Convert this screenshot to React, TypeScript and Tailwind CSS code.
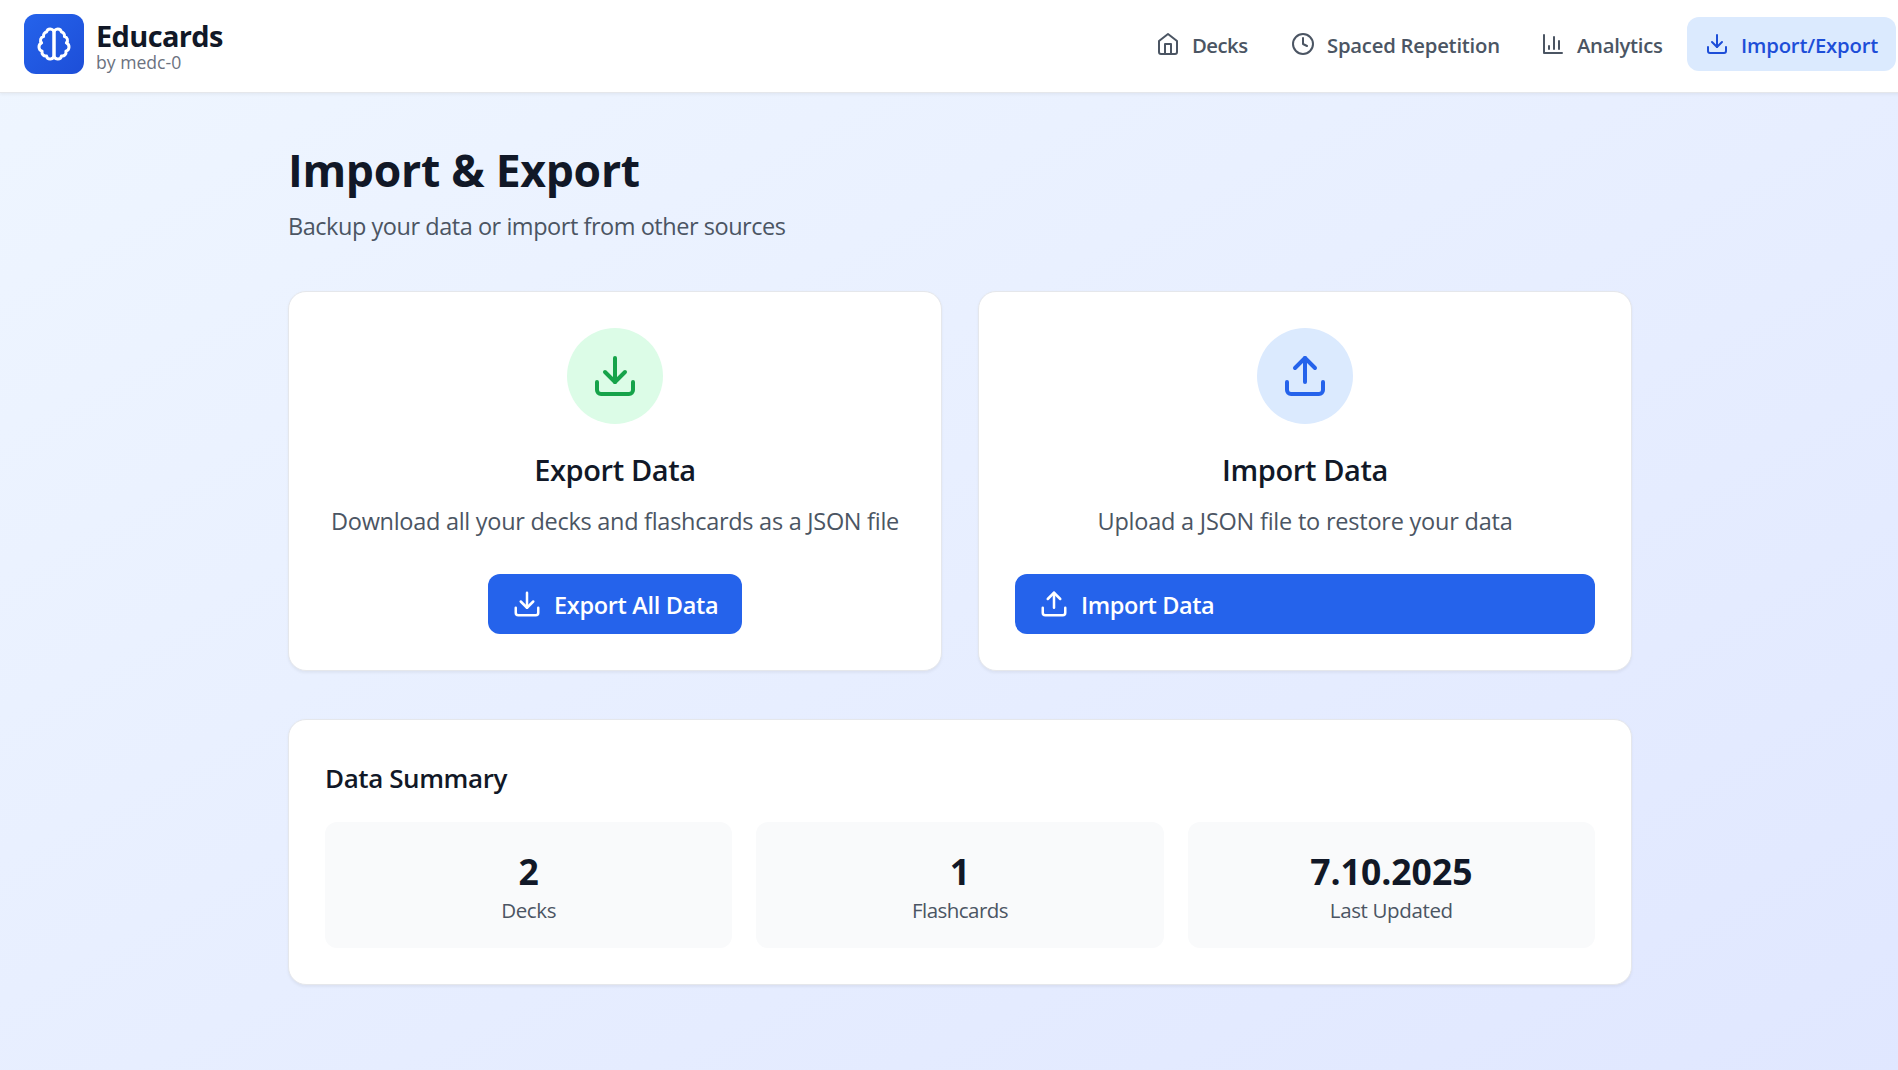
import type { ReactNode } from "react";

function Icon({ className, children }: { className: string; children: ReactNode }) {
  return (
    <svg
      viewBox="0 0 24 24"
      fill="none"
      stroke="currentColor"
      strokeWidth={2}
      strokeLinecap="round"
      strokeLinejoin="round"
      className={`shrink-0 ${className}`}
    >
      {children}
    </svg>
  );
}

const BrainIcon = ({ className }: { className: string }) => (
  <Icon className={className}>
    <path d="M9.5 2A2.5 2.5 0 0 1 12 4.5v15a2.5 2.5 0 0 1-4.96.44 2.5 2.5 0 0 1-2.96-3.08 3 3 0 0 1-.34-5.58 2.5 2.5 0 0 1 1.32-4.24 2.5 2.5 0 0 1 1.98-3A2.5 2.5 0 0 1 9.5 2Z" />
    <path d="M14.5 2A2.5 2.5 0 0 0 12 4.5v15a2.5 2.5 0 0 0 4.96.44 2.5 2.5 0 0 0 2.96-3.08 3 3 0 0 0 .34-5.58 2.5 2.5 0 0 0-1.32-4.24 2.5 2.5 0 0 0-1.98-3A2.5 2.5 0 0 0 14.5 2Z" />
  </Icon>
);

const HomeIcon = () => (
  <Icon className="size-6">
    <path d="m3 9 9-7 9 7v11a2 2 0 0 1-2 2H5a2 2 0 0 1-2-2z" />
    <polyline points="9 22 9 12 15 12 15 22" />
  </Icon>
);

const ClockIcon = () => (
  <Icon className="size-6">
    <circle cx="12" cy="12" r="10" />
    <polyline points="12 6 12 12 16 14" />
  </Icon>
);

const ChartIcon = () => (
  <Icon className="size-6">
    <path d="M3 3v18h18" />
    <path d="M18 17V9" />
    <path d="M13 17V5" />
    <path d="M8 17v-3" />
  </Icon>
);

const DownloadIcon = ({ className }: { className: string }) => (
  <Icon className={className}>
    <path d="M21 15v4a2 2 0 0 1-2 2H5a2 2 0 0 1-2-2v-4" />
    <polyline points="7 10 12 15 17 10" />
    <line x1="12" x2="12" y1="15" y2="3" />
  </Icon>
);

const UploadIcon = ({ className }: { className: string }) => (
  <Icon className={className}>
    <path d="M21 15v4a2 2 0 0 1-2 2H5a2 2 0 0 1-2-2v-4" />
    <polyline points="17 8 12 3 7 8" />
    <line x1="12" x2="12" y1="3" y2="15" />
  </Icon>
);

function NavItem({
  icon,
  label,
  className,
  textClass,
}: {
  icon: ReactNode;
  label: string;
  className: string;
  textClass: string;
}) {
  return (
    <button
      className={`flex h-[54px] items-center gap-3 rounded-xl pl-[18px] text-[20.3px] leading-[30px] font-semibold whitespace-nowrap ${className}`}
    >
      {icon}
      <span className={`translate-y-px ${textClass}`}>{label}</span>
    </button>
  );
}

const card = "rounded-[18px] border border-gray-200 bg-white p-9 shadow-[0_1.5px_3px_rgba(0,0,0,0.05)]";
const button =
  "flex h-[60px] items-center gap-3 rounded-xl bg-[#2563eb] pl-6 text-[23.5px] leading-9 font-semibold whitespace-nowrap text-white";

function Stat({ value, label, labelClass }: { value: string; label: string; labelClass: string }) {
  return (
    <div className="h-[126px] rounded-xl bg-[#f9fafb] py-6 text-center">
      <div className="translate-y-px text-[35.5px] leading-[48px] font-bold text-[#111827]">{value}</div>
      <div className={`translate-y-px text-[20.5px] leading-[30px] text-[#4b5563] ${labelClass}`}>{label}</div>
    </div>
  );
}

export default function App() {
  return (
    <div className="h-[1070px] w-full overflow-hidden font-['Open_Sans',sans-serif]">
      <div className="h-full w-[1920px] bg-[linear-gradient(to_bottom_right,#eff6ff,#e0e7ff)]">
        <header className="relative flex h-[93px] justify-between border-b border-gray-200 bg-white px-6 pt-3.5 shadow-[0_1.5px_3px_rgba(0,0,0,0.05)]">
          <div className="flex h-[60px] items-center gap-3">
            <div className="flex size-[60px] items-center justify-center rounded-xl bg-[linear-gradient(to_bottom_right,#2563eb,#1d4ed8)] text-white">
              <BrainIcon className="size-9" />
            </div>
            <div className="pt-1.5">
              <h1 className="translate-y-px text-[29px] leading-[30px] font-bold tracking-[-0.65px] text-[#111827]">
                Educards
              </h1>
              <p className="text-[17.6px] leading-6 text-[#6b7280]">by medc-0</p>
            </div>
          </div>
          <nav className="flex h-[60px] items-center gap-1.5 text-[#4b5563]">
            <NavItem icon={<HomeIcon />} label="Decks" className="w-[129px]" textClass="tracking-[-0.5px]" />
            <NavItem icon={<ClockIcon />} label="Spaced Repetition" className="w-[244px]" textClass="tracking-[-0.23px]" />
            <NavItem icon={<ChartIcon />} label="Analytics" className="w-[158px]" textClass="tracking-[-0.3px]" />
            <NavItem
              icon={<DownloadIcon className="size-6" />}
              label="Import/Export"
              className="w-[209px] bg-[#dbeafe] text-[#1d4ed8]"
              textClass="tracking-[-0.18px]"
            />
          </nav>
        </header>

        <main className="mx-auto w-[1344px] pt-12">
          <h2 className="translate-y-[2px] text-[44.5px] leading-[54px] font-bold tracking-[-0.28px] text-[#111827]">
            Import &amp; Export
          </h2>
          <p className="mt-3 translate-y-px text-[23.5px] leading-9 tracking-[-0.46px] text-[#4b5563]">
            Backup your data or import from other sources
          </p>

          <div className="mt-12 grid grid-cols-2 gap-9">
            <section className={`h-[380px] ${card}`}>
              <div className="mx-auto flex size-24 items-center justify-center rounded-full bg-[#dcfce7] text-[#16a34a]">
                <DownloadIcon className="size-12" />
              </div>
              <h3 className="mt-6 translate-y-px text-center text-[29px] leading-[42px] font-semibold tracking-[-0.38px] text-[#111827]">
                Export Data
              </h3>
              <p className="mt-3 translate-y-px text-center text-[23.5px] leading-9 tracking-[-0.28px] whitespace-nowrap text-[#4b5563]">
                Download all your decks and flashcards as a JSON file
              </p>
              <button className={`mx-auto mt-9 w-[254px] ${button}`}>
                <DownloadIcon className="size-[30px]" />
                <span className="translate-y-px tracking-[-0.32px]">Export All Data</span>
              </button>
            </section>

            <section className={`h-[380px] ${card}`}>
              <div className="mx-auto flex size-24 items-center justify-center rounded-full bg-[#dbeafe] text-[#2563eb]">
                <UploadIcon className="size-12" />
              </div>
              <h3 className="mt-6 translate-y-px text-center text-[29px] leading-[42px] font-semibold tracking-[-0.38px] text-[#111827]">
                Import Data
              </h3>
              <p className="mt-3 translate-y-px text-center text-[23.5px] leading-9 tracking-[-0.22px] whitespace-nowrap text-[#4b5563]">
                Upload a JSON file to restore your data
              </p>
              <button className={`mt-9 w-full ${button}`}>
                <UploadIcon className="size-[30px]" />
                <span className="translate-y-px tracking-[-0.42px]">Import Data</span>
              </button>
            </section>
          </div>

          <section className={`mt-12 h-[266px] ${card}`}>
            <h3 className="translate-y-px text-[26px] leading-[42px] font-semibold tracking-[-0.41px] text-[#111827]">
              Data Summary
            </h3>
            <div className="mt-6 grid grid-cols-3 gap-6">
              <Stat value="2" label="Decks" labelClass="tracking-[-0.4px]" />
              <Stat value="1" label="Flashcards" labelClass="tracking-[-0.55px]" />
              <Stat value="7.10.2025" label="Last Updated" labelClass="tracking-[-0.36px]" />
            </div>
          </section>
        </main>
      </div>
    </div>
  );
}
